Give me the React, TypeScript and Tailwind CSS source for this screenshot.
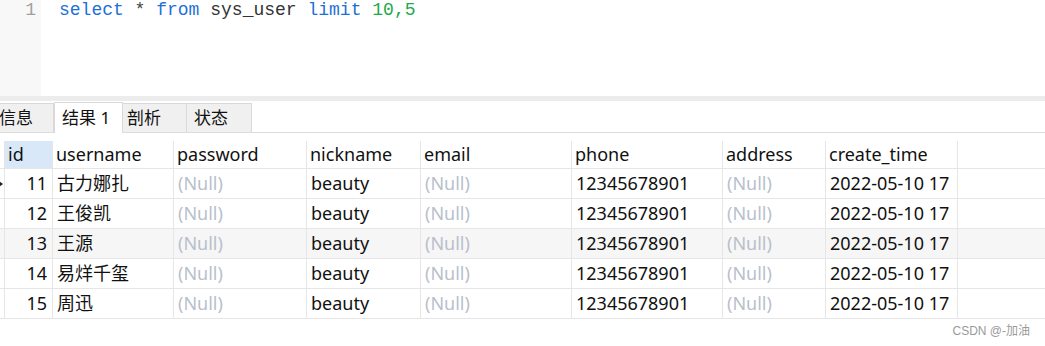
const columns = [
  { key: "id", label: "id", width: 48 },
  { key: "username", label: "username", width: 121 },
  { key: "password", label: "password", width: 133 },
  { key: "nickname", label: "nickname", width: 114 },
  { key: "email", label: "email", width: 151 },
  { key: "phone", label: "phone", width: 151 },
  { key: "address", label: "address", width: 103 },
  { key: "create_time", label: "create_time", width: 132 },
];

const rows = [
  { id: "11", username: "古力娜扎" },
  { id: "12", username: "王俊凯" },
  { id: "13", username: "王源" },
  { id: "14", username: "易烊千玺" },
  { id: "15", username: "周迅" },
];

const sans = { fontFamily: '"Noto Sans", "Noto Sans CJK SC", sans-serif' };

function Cell({ value, width, nul, right }: { value: string; width: number; nul?: boolean; right?: boolean }) {
  return (
    <div
      className={`h-full shrink-0 flex items-center border-r border-[#e6e6e6] overflow-hidden whitespace-nowrap ${right ? "justify-end pr-[5px]" : "pl-[4px]"}`}
      style={{ width }}
    >
      <span className={nul ? "text-[#b9bfcc]" : "text-[#111]"}>{value}</span>
    </div>
  );
}

export default function App() {
  return (
    <div className="w-[1045px] h-[346px] bg-white relative overflow-hidden" style={sans}>
      {/* editor */}
      <div className="flex h-[96px]">
        <div className="w-[41px] bg-[#f8f8f8] text-right pr-[5px] text-[18px] leading-[20px] text-[#a0a0a0]" style={{ fontFamily: '"Liberation Mono", monospace' }}>
          1
        </div>
        <div className="pl-[18px] text-[18px] leading-[20px] whitespace-pre" style={{ fontFamily: '"Liberation Mono", monospace' }}>
          <span className="text-[#1e6fd6]">select</span>
          <span className="text-[#444]"> * </span>
          <span className="text-[#1e6fd6]">from</span>
          <span className="text-[#333]"> sys_user </span>
          <span className="text-[#1e6fd6]">limit</span>
          <span className="text-[#1ea84a]"> 10,5</span>
        </div>
      </div>
      <div className="h-[5px] bg-[#ececec]" />

      {/* tabs */}
      <div className="flex items-end h-[32px] border-b border-[#dcdcdc] text-[17px] text-[#111]">
        <div className="h-[29px] w-[55px] -ml-[1px] bg-[#f0f0f0] border border-b-0 border-[#d9d9d9] flex items-center">
          <span className="-ml-[1px]">信息</span>
        </div>
        <div className="h-[31px] w-[69px] bg-white border border-b-0 border-[#d9d9d9] flex items-center pl-[7px] -mb-[1px]">结果 1</div>
        <div className="h-[29px] w-[64px] bg-[#f0f0f0] border border-b-0 border-l-0 border-[#d9d9d9] flex items-center pl-[4px]">剖析</div>
        <div className="h-[29px] w-[65px] bg-[#f0f0f0] border border-b-0 border-l-0 border-[#d9d9d9] flex items-center pl-[7px]">状态</div>
      </div>

      {/* grid */}
      <div className="mt-[8px] text-[18px]">
        <div className="flex h-[28px] border-b border-[#e6e6e6]">
          <div className="w-[5px] h-full border-r border-[#e6e6e6]" />
          {columns.map((c, i) => (
            <div
              key={c.key}
              className={`h-full shrink-0 flex items-center pl-[3px] border-r border-[#e6e6e6] text-[#111] ${i === 0 ? "bg-[#d8e8f8]" : ""}`}
              style={{ width: c.width }}
            >
              {c.label}
            </div>
          ))}
        </div>
        {rows.map((r, i) => (
          <div key={r.id} className={`flex h-[30px] border-b border-[#e6e6e6] ${i === 2 ? "bg-[#f6f6f6]" : ""}`}>
            <div className="w-[5px] h-full border-r border-[#e6e6e6] flex items-center overflow-hidden">
              {i === 0 && <span className="block w-0 h-0 -ml-[1px] border-y-[3px] border-y-transparent border-l-[4px] border-l-[#222]" />}
            </div>
            <Cell value={r.id} width={48} right />
            <Cell value={r.username} width={121} />
            <Cell value="(Null)" width={133} nul />
            <Cell value="beauty" width={114} />
            <Cell value="(Null)" width={151} nul />
            <Cell value="12345678901" width={151} />
            <Cell value="(Null)" width={103} nul />
            <Cell value="2022-05-10 17" width={132} />
          </div>
        ))}
      </div>

      <div className="absolute right-[15px] bottom-[8px] text-[12px] leading-[14px] text-[#9a9a9a]" style={{ fontFamily: '"Liberation Sans", "Noto Sans CJK SC", sans-serif' }}>
        CSDN @-加油
      </div>
    </div>
  );
}
